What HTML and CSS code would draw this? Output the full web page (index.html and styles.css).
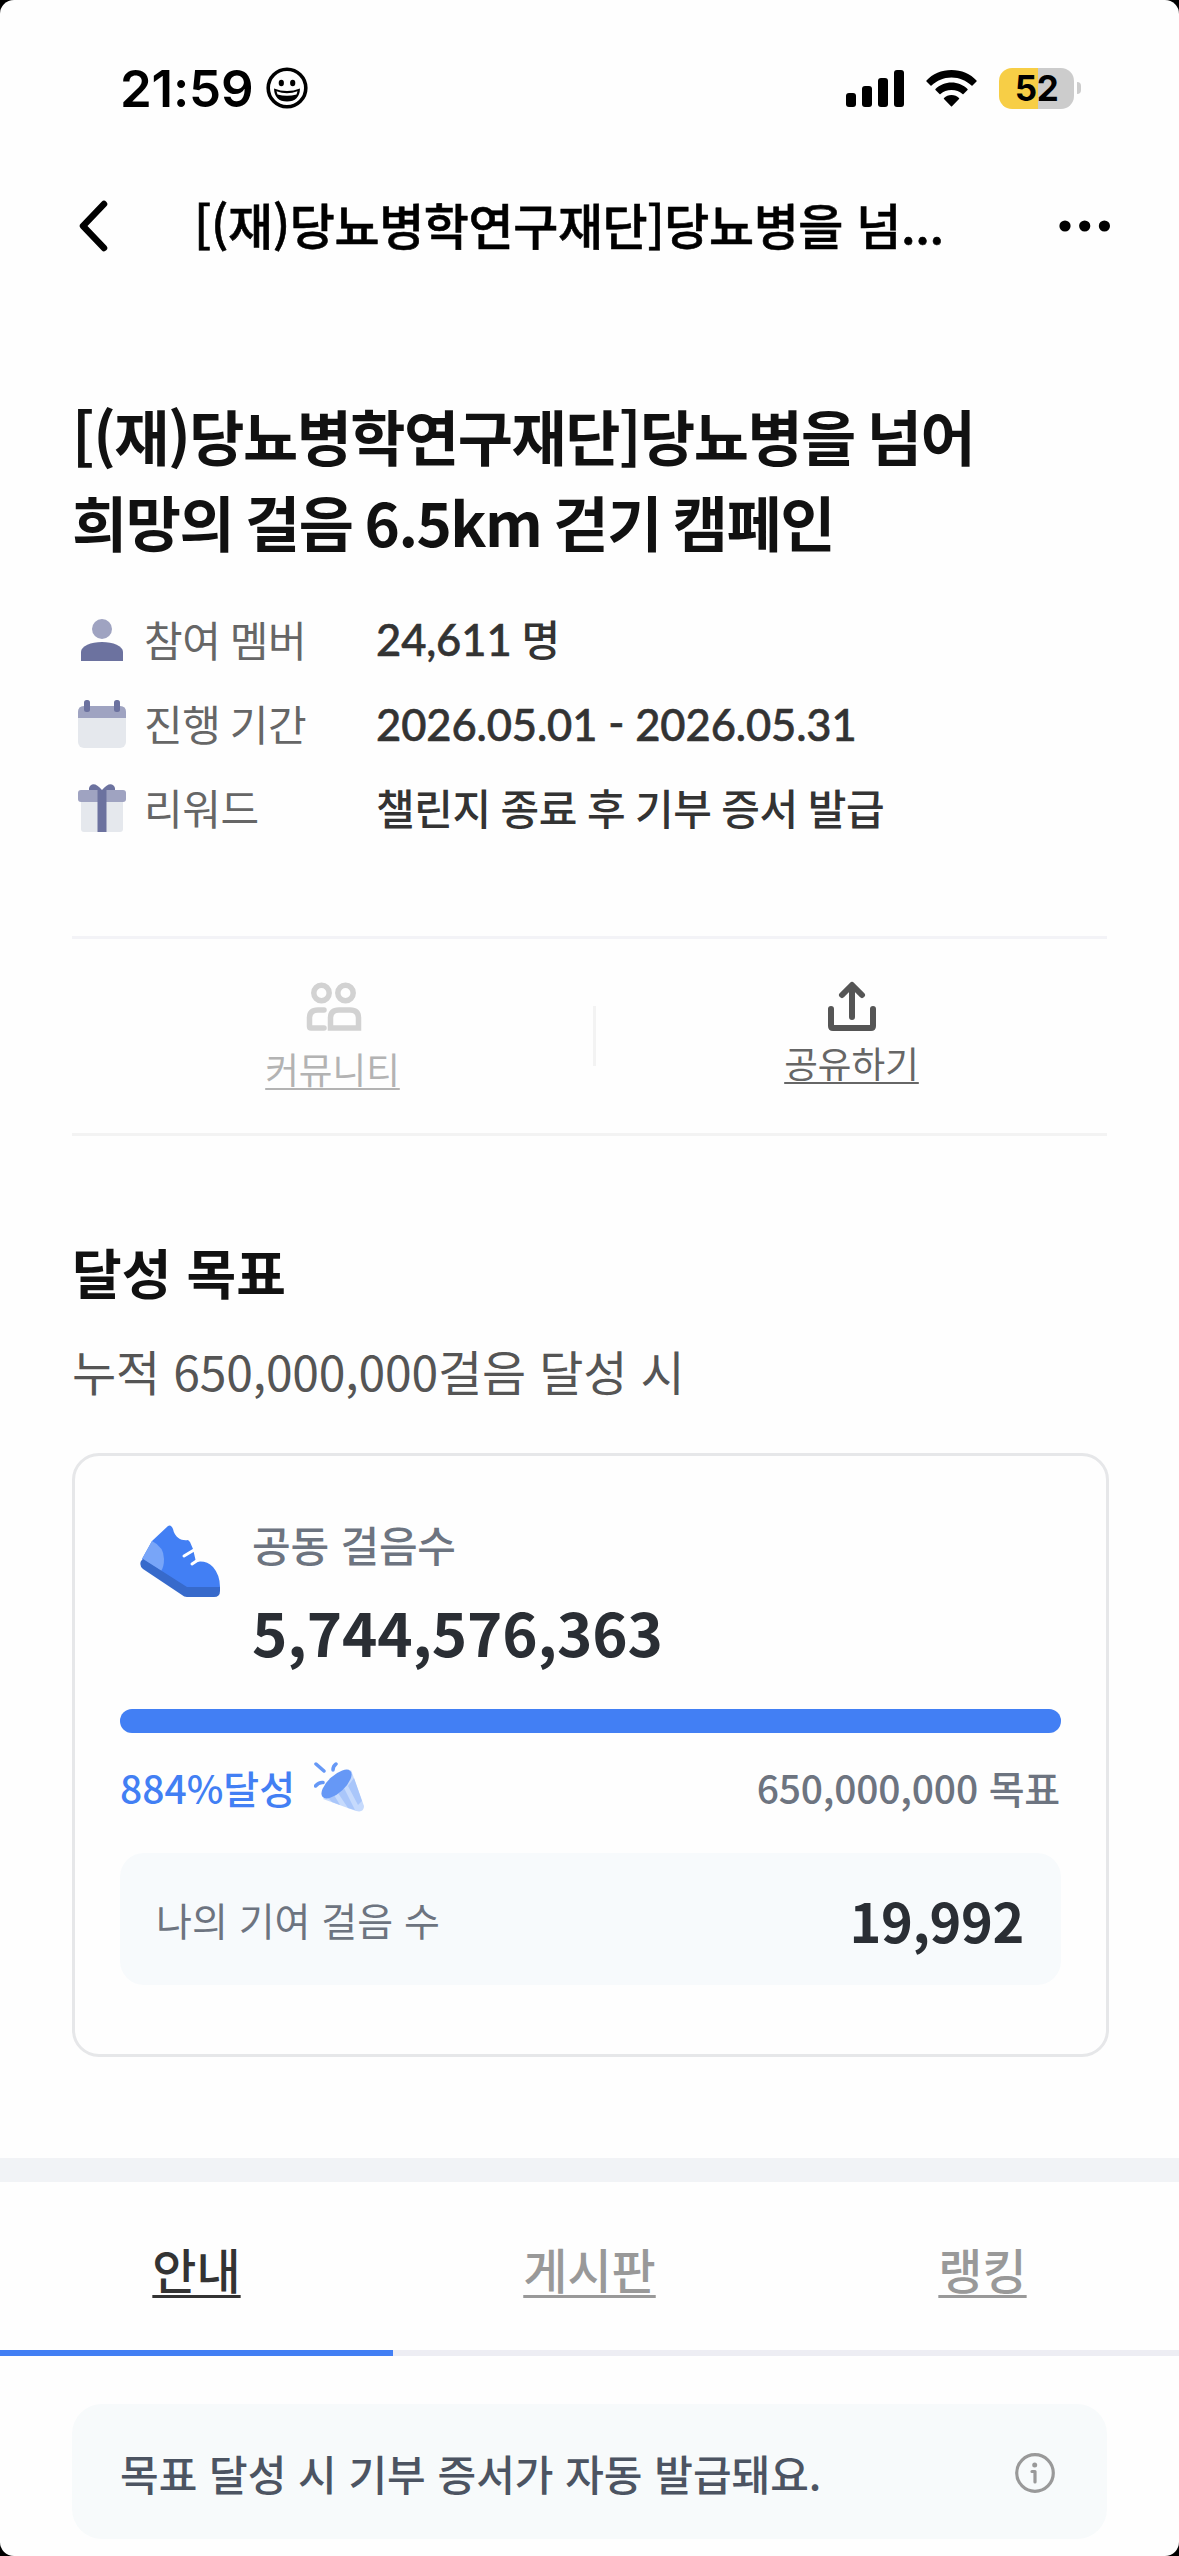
FILE: index.html
```html
<!DOCTYPE html>
<html lang="ko">
<head>
    <meta charset="UTF-8">
    <meta name="viewport" content="width=device-width, initial-scale=1.0">
    <title>당뇨병을 넘어 희망의 걸음</title>
    <link rel="stylesheet" href="styles.css">
</head>
<body>
    <div class="screen">
        <div class="status-bar">
            <span class="time">21:59</span>
            <svg class="smile" width="42" height="42" viewBox="0 0 42 42">
                <circle cx="21" cy="21" r="18.800" fill="none" stroke="#000" stroke-width="3.600"/>
                <ellipse cx="15.300" cy="16" rx="2.600" ry="3.200"/>
                <ellipse cx="26.700" cy="16" rx="2.600" ry="3.200"/>
                <path d="M8 21.500Q21 26.500 34 21.500Q33.500 34.500 21 34.500T8 21.500Z"/>
                <path d="M10.500 24.200Q21 28.200 31.500 24.200L30.500 27.500Q21 30 11.500 27.500Z" fill="#fff"/>
            </svg>
            <div class="status-icons">
                <svg width="58" height="37" viewBox="0 0 58 37">
                    <rect x="0" y="23" width="10" height="14" rx="3"/>
                    <rect x="16" y="16" width="10" height="21" rx="3"/>
                    <rect x="32" y="8" width="10" height="29" rx="3"/>
                    <rect x="48" y="0" width="10" height="37" rx="3"/>
                </svg>
                <svg class="wifi" width="51" height="37" viewBox="0 0 51 37">
                    <path d="M25.500 0C35.500 0 44.500 4 50.500 10.500Q51 11 50.500 11.500L46.500 15.500Q46 16 45.500 15.500C40 10.500 33.500 7.500 25.500 7.500S11 10.500 5.500 15.500Q5 16 4.500 15.500L.5 11.500Q0 11 .5 10.500C6.500 4 15.500 0 25.500 0Z"/>
                    <path d="M25.500 12.500C31.500 12.500 37.500 15 41.500 19Q42 19.500 41.500 20L37.500 24Q37 24.500 36.500 24C33.500 21.500 30 20 25.500 20S17.500 21.500 14.500 24Q14 24.500 13.500 24L9.500 20Q9 19.500 9.500 19C13.500 15 19.500 12.500 25.500 12.500Z"/>
                    <path d="M25.500 25C28.500 25 31 26 33 28Q33.500 28.500 33 29L26 36.300Q25.500 36.800 25 36.300L18 29Q17.500 28.500 18 28C20 26 22.500 25 25.500 25Z"/>
                </svg>
                <div class="battery">52</div>
                <div class="battery-tip"></div>
            </div>
        </div>

        <header class="nav-bar">
            <svg width="29" height="52" viewBox="0 0 29 52" fill="none" stroke="#000" stroke-width="6.500" stroke-linecap="round" stroke-linejoin="round">
                <path d="M25 4L4 26L25 48"/>
            </svg>
            <div class="nav-title">[(재)당뇨병학연구재단]당뇨병을 넘...</div>
            <svg class="more" width="52" height="12" viewBox="0 0 52 12">
                <circle cx="6" cy="6" r="5.600"/>
                <circle cx="25.700" cy="6" r="5.600"/>
                <circle cx="45.400" cy="6" r="5.600"/>
            </svg>
        </header>

        <main>
            <h1>[(재)당뇨병학연구재단]당뇨병을 넘어<br>희망의 걸음 6.5km 걷기 캠페인</h1>

            <div class="info">
                <div class="info-row">
                    <svg width="60" height="60" viewBox="0 0 60 60">
                        <circle cx="30" cy="19" r="10" fill="#9fa3c1"/>
                        <path d="M9 51V42C9 36 19 32 30 32S51 36 51 42V51Z" fill="#6c729f"/>
                    </svg>
                    <span class="info-label">참여 멤버</span>
                    <span class="info-value"><span class="num">24,611</span> 명</span>
                </div>
                <div class="info-row">
                    <svg width="60" height="60" viewBox="0 0 60 60">
                        <rect x="6" y="12" width="48" height="42" rx="6" fill="#e5e8ed"/>
                        <path d="M6 24V18Q6 12 12 12H48Q54 12 54 18V24Z" fill="#9fa3c1"/>
                        <rect x="12" y="6" width="6" height="12" rx="2.500" fill="#6c729f"/>
                        <rect x="42" y="6" width="6" height="12" rx="2.500" fill="#6c729f"/>
                    </svg>
                    <span class="info-label">진행 기간</span>
                    <span class="info-value num">2026.05.01 - 2026.05.31</span>
                </div>
                <div class="info-row">
                    <svg width="60" height="60" viewBox="0 0 60 60">
                        <rect x="9" y="20" width="42" height="34" rx="3" fill="#e5e8ed"/>
                        <rect x="6" y="12" width="48" height="12" rx="3" fill="#9fa3c1"/>
                        <path d="M25.500 54V12H34.500V54Z" fill="#6c729f"/>
                        <path d="M30 12Q24 5 20 6.500Q16.500 8 17 12ZM30 12Q36 5 40 6.500Q43.500 8 43 12Z" fill="#6c729f"/>
                    </svg>
                    <span class="info-label">리워드</span>
                    <span class="info-value">챌린지 종료 후 기부 증서 발급</span>
                </div>
            </div>

            <div class="actions">
                <a class="action disabled">
                    <svg width="60" height="60" viewBox="0 0 60 60" fill="none" stroke="#d2d2d2" stroke-width="5.500" stroke-linecap="round">
                        <circle cx="18.500" cy="16" r="7.700"/>
                        <circle cx="42.500" cy="16" r="7.700"/>
                        <path d="M21 33H15Q6.500 33 6.500 41V49.500Q6.500 51 8 51H21"/>
                        <path d="M36 33H47Q55.500 33 55.500 41V51H27.500V41Q27.500 33 36 33Z"/>
                    </svg>
                    <span>커뮤니티</span>
                </a>
                <div class="action-divider"></div>
                <a class="action share">
                    <svg width="60" height="60" viewBox="0 0 60 60" fill="none" stroke="#555" stroke-width="6" stroke-linecap="round" stroke-linejoin="round">
                        <path d="M9 32V49Q9 51 11 51H49Q51 51 51 49V32"/>
                        <path d="M30 40V10M20 18L30 8L40 18"/>
                    </svg>
                    <span>공유하기</span>
                </a>
            </div>

            <section class="goal">
                <h2>달성 목표</h2>
                <p class="goal-desc">누적 650,000,000걸음 달성 시</p>

                <div class="card">
                    <div class="steps">
                        <svg class="shoe" width="80" height="73" viewBox="0 0 80 73">
                            <path d="M28 1Q31 -1 33 4C35 14 43 16 48 15L50 17L53 24L56 37Q66 35 73 42Q80 50 80 62L44 66L2 34L12 16Z" fill="#427ff4"/>
                            <path d="M12 16Q24 22 24 34Q24 42 21 46L2 34Z" fill="#78a5f8"/>
                            <path d="M3 34L47 62H80V66Q80 72 74 72H47Q44 72 42 70L3 44Q-1 41 1 36Z" fill="#376acb"/>
                            <path d="M54 25L44 31M58 35L52 39" fill="none" stroke="#fff" stroke-width="3" stroke-linecap="round"/>
                        </svg>
                        <div>
                            <div class="steps-label">공동 걸음수</div>
                            <div class="steps-count">5,744,576,363</div>
                        </div>
                    </div>
                    <div class="progress"><div class="progress-fill" style="width: 100%"></div></div>
                    <div class="progress-text">
                        <span class="percent">884%달성</span>
                        <svg width="50" height="50" viewBox="0 0 50 50">
                            <path d="M37 8L50 44Q50 51 42 49L9 37Z" fill="#c6dafc"/>
                            <path d="M40 16L48 39L44 43L34 24ZM30 26L41 48L34 46L24 31ZM20 33L26 43L18 40L14 36Z" fill="#a9c6fa"/>
                            <ellipse cx="22.500" cy="22" rx="19" ry="8.500" transform="rotate(-43 22.500 22)" fill="#6698f6"/>
                            <path d="M2 2L10 9M22 2Q19 4 19 8M1.500 24Q5 20 9 20.500" fill="none" stroke="#6698f6" stroke-width="3.500" stroke-linecap="round"/>
                        </svg>
                        <span class="target">650,000,000 목표</span>
                    </div>
                    <div class="mine">
                        <span>나의 기여 걸음 수</span>
                        <strong>19,992</strong>
                    </div>
                </div>
            </section>
        </main>

        <nav class="tabs">
            <a class="tab active"><span>안내</span></a>
            <a class="tab"><span>게시판</span></a>
            <a class="tab"><span>랭킹</span></a>
        </nav>

        <div class="notice">
            <span>목표 달성 시 기부 증서가 자동 발급돼요.</span>
            <svg width="40" height="40" viewBox="0 0 40 40" fill="none" stroke="#999" stroke-width="3.200" stroke-linecap="round" stroke-linejoin="round">
                <circle cx="20" cy="20" r="18.300"/>
                <path d="M17 18.500H20V29"/>
                <circle cx="19.700" cy="12" r="2.500" fill="#999" stroke="none"/>
            </svg>
        </div>
    </div>
</body>
</html>
```
FILE: styles.css
```css
* {
    box-sizing: border-box;
}

body {
    margin: 0;
    background-color: #000;
    font-family: "Noto Sans CJK KR", sans-serif;
    color: #111;
}

svg {
    display: block;
    flex-shrink: 0;
}

.screen {
    width: 1179px;
    height: 2556px;
    overflow: hidden;
    background-color: #fefefe;
    border-radius: 14px;
}

.status-bar {
    display: flex;
    align-items: center;
    height: 176px;
    padding: 0 98px 0 120px;
}

.time {
    width: 146px;
    font-family: Inter, sans-serif;
    font-size: 51px;
    font-weight: 600;
    letter-spacing: -0.2px;
    color: #000;
}

.status-icons {
    display: flex;
    align-items: center;
    margin-left: auto;
}

.wifi {
    margin: 0 22px;
}

.battery {
    width: 75px;
    height: 41px;
    border-radius: 13px;
    background: linear-gradient(to right, #f7ce46 39px, #ccc 39px);
    font-family: Inter, sans-serif;
    font-size: 35px;
    font-weight: 700;
    line-height: 41px;
    letter-spacing: -0.5px;
    text-align: center;
    color: #000;
}

.battery-tip {
    width: 4px;
    height: 12px;
    margin-left: 3px;
    border-radius: 0 4px 4px 0;
    background-color: #ccc;
}

.nav-bar {
    display: flex;
    align-items: center;
    height: 100px;
    padding: 0 68px 0 79px;
}

.nav-title {
    margin-left: 86px;
    padding-bottom: 4px;
    font-size: 49px;
    font-weight: 500;
    line-height: 70px;
    letter-spacing: -0.4px;
    white-space: nowrap;
    color: #000;
    -webkit-text-stroke: 0.6px #000;
}

.more {
    margin-left: auto;
}

main {
    padding: 116px 70px 0 72px;
}

h1 {
    margin: 0;
    font-size: 60px;
    font-weight: 700;
    line-height: 86px;
    letter-spacing: -1.5px;
    word-spacing: -3.3px;
    white-space: nowrap;
}

.info {
    margin-top: 34px;
}

.info-row {
    display: flex;
    align-items: center;
    height: 84px;
    font-size: 42px;
    line-height: 60px;
}

.info-label {
    width: 232px;
    margin-left: 12px;
    padding-bottom: 3px;
    letter-spacing: -0.4px;
    word-spacing: -2px;
    color: #666;
}

.info-value {
    padding-bottom: 3px;
    font-weight: 500;
    letter-spacing: -0.4px;
    word-spacing: -1.5px;
    color: #333;
    white-space: nowrap;
}

.num {
    padding-bottom: 0;
    font-family: Lato, sans-serif;
    font-size: 43.5px;
    letter-spacing: -0.1px;
    word-spacing: 0;
    font-feature-settings: "case";
    -webkit-text-stroke: 0.6px #333;
}

.actions {
    display: flex;
    width: 1035px;
    height: 200px;
    margin-top: 86px;
    border-top: 3px solid #f3f3f7;
    border-bottom: 3px solid #f3f3f3;
}

.action {
    flex: 0 0 521px;
    display: flex;
    flex-direction: column;
    align-items: center;
    padding-top: 38px;
    font-size: 36.6px;
    line-height: 52px;
    text-decoration: underline;
    text-decoration-thickness: 2px;
    text-underline-offset: 4px;
    color: #666;
}

.action span {
    margin-top: 6px;
}

.action.disabled {
    color: #b3b3b3;
}

.action.share {
    flex: 1;
}

.action.share span {
    margin-top: 0;
}

.action-divider {
    width: 3px;
    height: 60px;
    margin-top: 67px;
    background-color: #f3f3f3;
}

.goal {
    padding-top: 96px;
}

h2 {
    margin: 0;
    font-size: 54px;
    font-weight: 700;
    line-height: 80px;
}

.goal-desc {
    margin: 23px 0 0;
    font-size: 48px;
    line-height: 70px;
    letter-spacing: -0.17px;
    color: #555;
}

.card {
    height: 604px;
    margin-top: 48px;
    padding: 58px 45px 0;
    border: 3px solid #e6e7e9;
    border-radius: 27px;
}

.steps {
    display: flex;
}

.shoe {
    margin: 11px 32px 0 20px;
}

.steps-label {
    font-size: 42px;
    font-weight: 500;
    line-height: 60px;
    letter-spacing: -0.2px;
    color: #6d7480;
}

.steps-count {
    margin-top: 14px;
    font-size: 60px;
    font-weight: 700;
    line-height: 86px;
    letter-spacing: -0.15px;
    color: #2a2e34;
}

.progress {
    height: 24px;
    margin-top: 35px;
    border-radius: 12px;
    background-color: #edeff3;
}

.progress-fill {
    height: 100%;
    border-radius: 12px;
    background-color: #427ff4;
}

.progress-text {
    display: flex;
    align-items: center;
    height: 60px;
    margin-top: 24px;
    font-size: 39px;
    font-weight: 500;
}

.percent {
    margin-right: 19px;
    color: #427ff4;
}

.target {
    margin-left: auto;
    padding-right: 1px;
    letter-spacing: -0.2px;
    color: #6d7480;
}

.mine {
    display: flex;
    align-items: center;
    justify-content: space-between;
    height: 132px;
    margin-top: 36px;
    padding: 0 37px 0 36px;
    border-radius: 24px;
    background-color: #f7fafc;
    font-size: 39px;
    color: #6d7480;
}

.mine strong {
    font-size: 54px;
    letter-spacing: -0.4px;
    color: #2a2e34;
}

.tabs {
    display: flex;
    height: 198px;
    margin-top: 101px;
    border-top: 24px solid #f1f3f6;
}

.tab {
    flex: 1;
    padding-top: 51px;
    border-bottom: 6px solid #ededf3;
    font-size: 48px;
    font-weight: 500;
    line-height: 70px;
    text-align: center;
    text-decoration: underline;
    text-decoration-thickness: 3px;
    text-underline-offset: 6px;
    color: #999;
}

.tab.active {
    border-bottom-color: #427ff4;
    color: #333;
}

.notice {
    display: flex;
    align-items: center;
    justify-content: space-between;
    height: 135px;
    margin: 48px 72px 0;
    padding: 2px 52px 0 48px;
    border-radius: 30px;
    background-color: #f7fafb;
    font-size: 42px;
    font-weight: 500;
    color: #4c5462;
}
```
